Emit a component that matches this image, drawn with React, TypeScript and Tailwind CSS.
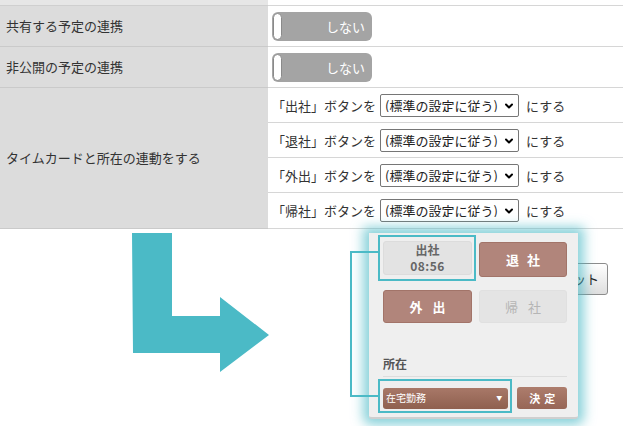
import { ChevronDown } from "lucide-react";

const FONT = { fontFamily: '"Noto Sans CJK JP", "Noto Sans", sans-serif' };

function Toggle() {
  return (
    <div className="relative flex h-[29px] w-[100px] items-center justify-end rounded-[6px] bg-[#a4a4a4] pr-[7px]">
      <span className="absolute left-[1px] top-[1px] h-[27px] w-[9px] rounded-full border border-[#8a8a8a] bg-white" />
      <span className="text-[13px] leading-none text-white">しない</span>
    </div>
  );
}

function TimecardRow({ label, last }: { label: string; last?: boolean }) {
  return (
    <div className={`flex h-[35px] items-center pl-[4px] text-[13px] text-[#333] ${last ? "" : "border-b border-[#d6d6d6]"}`}>
      <span className="leading-none">「{label}」ボタンを</span>
      <div className="relative ml-[4px]">
        <select
          defaultValue="std"
          className="h-[23px] w-[139px] appearance-none rounded-[2px] border border-[#767676] bg-white pl-[4px] text-[13px] leading-none text-[#222]"
          style={FONT}
        >
          <option value="std">(標準の設定に従う)</option>
        </select>
        <ChevronDown className="pointer-events-none absolute right-[4px] top-[6px] h-[12px] w-[12px] text-black" strokeWidth={4} />
      </div>
      <span className="ml-[7px] leading-none">にする</span>
    </div>
  );
}

function CardButton({ children, tone }: { children: React.ReactNode; tone: "brown" | "gray" | "off" }) {
  const cls =
    tone === "brown"
      ? "bg-[#b1857b] text-white border-[#a27469]"
      : tone === "gray"
        ? "bg-[#e3e3e3] text-[#666] border-[#dcdcdc]"
        : "bg-[#e4e4e4] text-[#b5b5b5] border-[#e0e0e0]";
  return (
    <div className={`flex h-full flex-col items-center justify-center rounded-[3px] border text-[13px] font-bold ${cls}`}>
      {children}
    </div>
  );
}

export default function App() {
  return (
    <div className="relative h-[426px] w-[640px] overflow-hidden bg-white text-[13px] text-[#333]" style={FONT}>
      <div className="grid w-[623px] grid-cols-[268px_355px]">
        <div className="h-[6px] border-b border-[#cfcfcf] bg-[#e6e6e6]" />
        <div className="h-[6px] border-b border-[#d6d6d6]" />

        <div className="flex h-[41px] items-center border-b border-[#cacaca] bg-[#dcdcdc] pl-[6px]">共有する予定の連携</div>
        <div className="flex h-[41px] items-center border-b border-[#d6d6d6] pl-[4px]">
          <Toggle />
        </div>

        <div className="flex h-[41px] items-center border-b border-[#cacaca] bg-[#dcdcdc] pl-[6px]">非公開の予定の連携</div>
        <div className="flex h-[41px] items-center border-b border-[#d6d6d6] pl-[4px]">
          <Toggle />
        </div>

        <div className="flex h-[141px] items-center border-b border-[#cacaca] bg-[#dcdcdc] pl-[6px]">タイムカードと所在の連動をする</div>
        <div className="flex h-[141px] flex-col border-b border-[#d6d6d6]">
          <TimecardRow label="出社" />
          <TimecardRow label="退社" />
          <TimecardRow label="外出" />
          <TimecardRow label="帰社" last />
        </div>
      </div>

      <div className="relative h-[197px]">
        <svg className="absolute left-0 top-0" width="640" height="197" viewBox="0 0 640 197">
          <polygon points="132,4 172,4 172,87 220,87 220,68 269,106 220,143 220,124 133,124" fill="#4bbac6" />
        </svg>

        <div className="absolute left-[540px] top-[34px] flex h-[32px] w-[68px] items-center justify-end rounded-[3px] border border-[#8c8c8c] bg-gradient-to-b from-white to-[#dedede] pr-[8px] text-[13px] text-[#222]">
          リセット
        </div>

        <div className="absolute left-[369px] top-[4px] flex h-[186px] w-[209px] flex-col rounded-b-[3px] border-b-2 border-[#cfcfcf] bg-[#efefef] pl-[14px] pr-[11px] pt-[8px] shadow-[0_0_12px_6px_rgba(75,186,198,0.65)]">
          <div className="grid grid-cols-[89px_88px] grid-rows-[35px_33px] gap-x-[7px] gap-y-[14px]">
            <div className="h-[34px]">
              <CardButton tone="gray">
                <span className="text-[12px] leading-[16px]">出社</span>
                <span className="text-[12px] leading-[16px] tracking-[0.5px]">08:56</span>
              </CardButton>
            </div>
            <div className="pt-[1px]">
              <div className="h-[35px]">
                <CardButton tone="brown">
                  <span className="pl-[8px] leading-none tracking-[8px]">退社</span>
                </CardButton>
              </div>
            </div>
            <CardButton tone="brown">
              <span className="pl-[10px] leading-none tracking-[10px]">外出</span>
            </CardButton>
            <CardButton tone="off">
              <span className="pl-[10px] font-normal leading-none tracking-[10px]">帰社</span>
            </CardButton>
          </div>

          <div className="mt-[33px] border-b border-[#dddddd] pb-[4px] text-[12px] font-bold leading-[16px] text-[#555]">所在</div>

          <div className="mt-[10px] flex items-center gap-[9px]">
            <div className="flex h-[21px] w-[126px] items-center justify-between rounded-[3px] bg-gradient-to-b from-[#a87868] to-[#8f604f] pl-[3px] pr-[6px] text-[10px] leading-none text-white">
              <span>在宅勤務</span>
              <span className="text-[6px]">▼</span>
            </div>
            <div className="flex h-[22px] w-[50px] items-center justify-center rounded-[3px] bg-gradient-to-b from-[#ad7d6d] to-[#976656] pl-[4px] text-[11px] font-bold leading-none tracking-[4px] text-white">
              決定
            </div>
          </div>
        </div>

        <div className="pointer-events-none absolute left-[378px] top-[6px] h-[46px] w-[98px] border-2 border-[#4bbac6]" />
        <div className="pointer-events-none absolute left-[378px] top-[150px] h-[34px] w-[134px] border-2 border-[#4bbac6]" />
        <div className="pointer-events-none absolute left-[350px] top-[22px] h-[146px] w-[2px] bg-[#4bbac6]" />
        <div className="pointer-events-none absolute left-[350px] top-[22px] h-[2px] w-[28px] bg-[#4bbac6]" />
        <div className="pointer-events-none absolute left-[350px] top-[166px] h-[2px] w-[28px] bg-[#4bbac6]" />
      </div>
    </div>
  );
}
